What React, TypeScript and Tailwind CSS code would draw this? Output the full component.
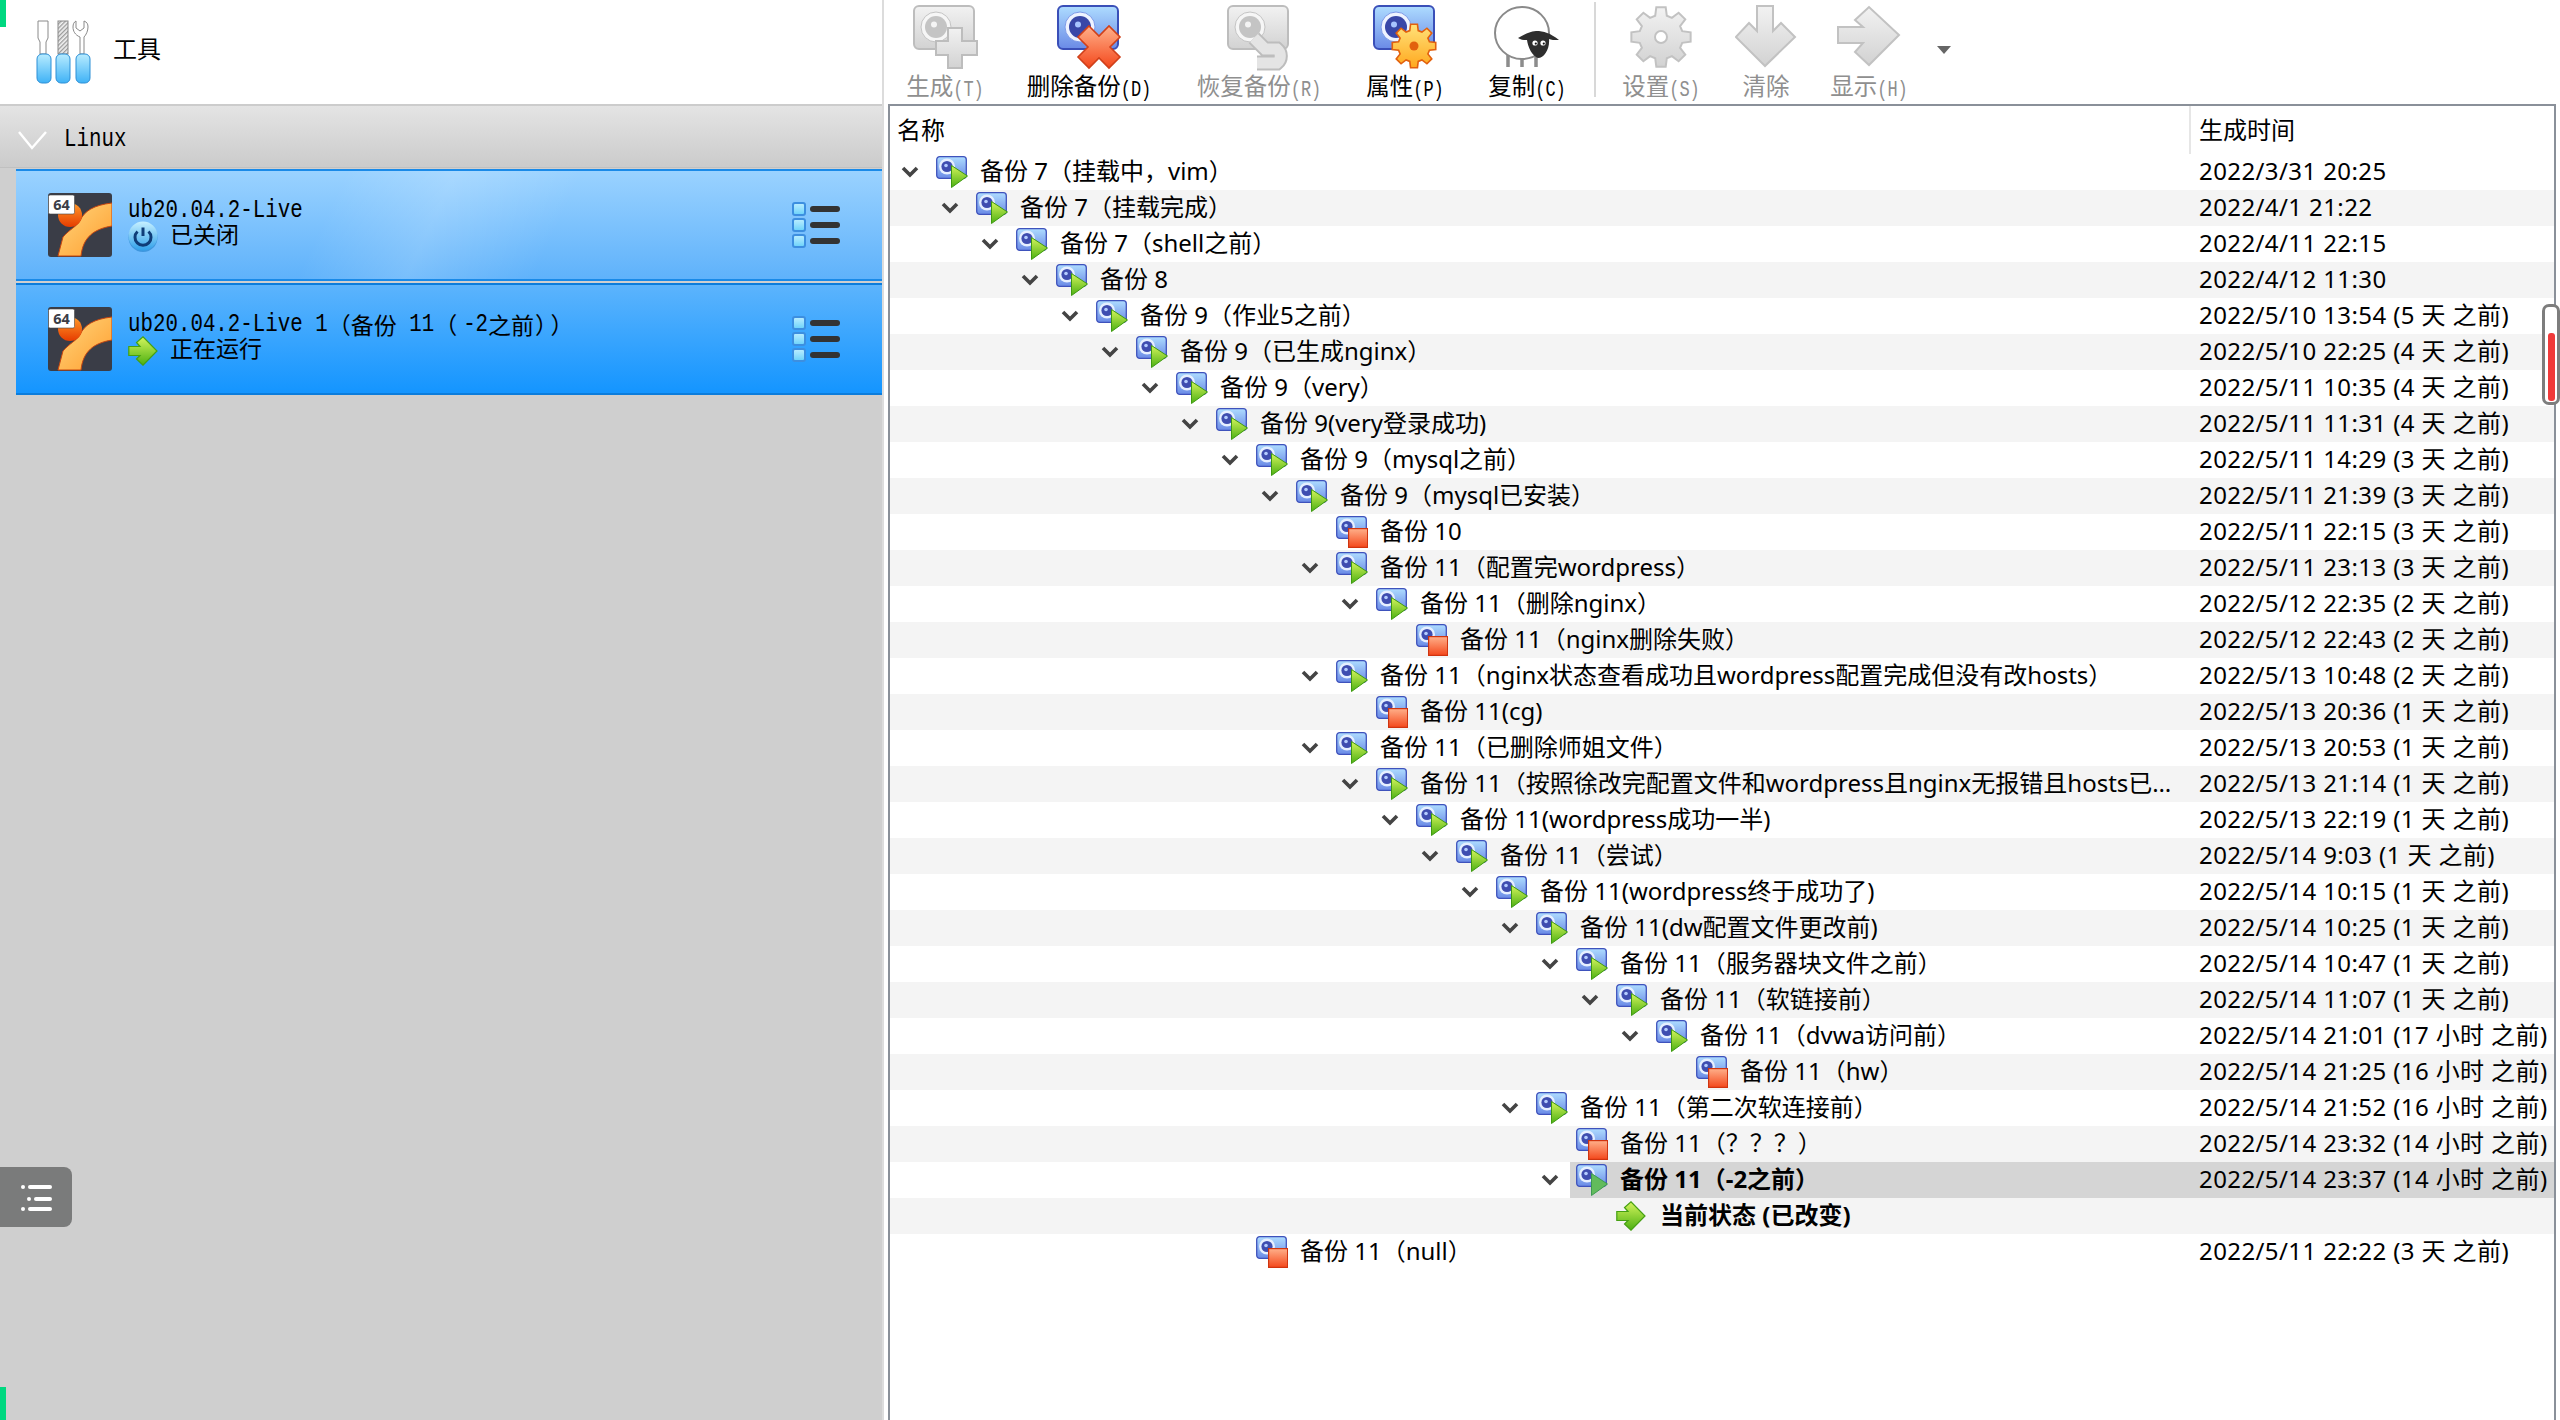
import React from "react";

type Snap = { name: string; level: number; time: string; leaf?: boolean; open?: boolean };

const rows: Snap[] = [
  { name: "备份 7（挂载中，vim）", level: 0, time: "2022/3/31 20:25" },
  { name: "备份 7（挂载完成）", level: 1, time: "2022/4/1 21:22" },
  { name: "备份 7（shell之前）", level: 2, time: "2022/4/11 22:15" },
  { name: "备份 8", level: 3, time: "2022/4/12 11:30" },
  { name: "备份 9（作业5之前）", level: 4, time: "2022/5/10 13:54 (5 天 之前)" },
  { name: "备份 9（已生成nginx）", level: 5, time: "2022/5/10 22:25 (4 天 之前)" },
  { name: "备份 9（very）", level: 6, time: "2022/5/11 10:35 (4 天 之前)" },
  { name: "备份 9(very登录成功)", level: 7, time: "2022/5/11 11:31 (4 天 之前)" },
  { name: "备份 9（mysql之前）", level: 8, time: "2022/5/11 14:29 (3 天 之前)" },
  { name: "备份 9（mysql已安装）", level: 9, time: "2022/5/11 21:39 (3 天 之前)" },
  { name: "备份 10", level: 10, time: "2022/5/11 22:15 (3 天 之前)", leaf: true },
  { name: "备份 11（配置完wordpress）", level: 10, time: "2022/5/11 23:13 (3 天 之前)" },
  { name: "备份 11（删除nginx）", level: 11, time: "2022/5/12 22:35 (2 天 之前)" },
  { name: "备份 11（nginx删除失败）", level: 12, time: "2022/5/12 22:43 (2 天 之前)", leaf: true },
  { name: "备份 11（nginx状态查看成功且wordpress配置完成但没有改hosts）", level: 10, time: "2022/5/13 10:48 (2 天 之前)" },
  { name: "备份 11(cg)", level: 11, time: "2022/5/13 20:36 (1 天 之前)", leaf: true },
  { name: "备份 11（已删除师姐文件）", level: 10, time: "2022/5/13 20:53 (1 天 之前)" },
  { name: "备份 11（按照徐改完配置文件和wordpress且nginx无报错且hosts已…", level: 11, time: "2022/5/13 21:14 (1 天 之前)" },
  { name: "备份 11(wordpress成功一半)", level: 12, time: "2022/5/13 22:19 (1 天 之前)" },
  { name: "备份 11（尝试）", level: 13, time: "2022/5/14 9:03 (1 天 之前)" },
  { name: "备份 11(wordpress终于成功了)", level: 14, time: "2022/5/14 10:15 (1 天 之前)" },
  { name: "备份 11(dw配置文件更改前)", level: 15, time: "2022/5/14 10:25 (1 天 之前)" },
  { name: "备份 11（服务器块文件之前）", level: 16, time: "2022/5/14 10:47 (1 天 之前)" },
  { name: "备份 11（软链接前）", level: 17, time: "2022/5/14 11:07 (1 天 之前)" },
  { name: "备份 11（dvwa访问前）", level: 18, time: "2022/5/14 21:01 (17 小时 之前)" },
  { name: "备份 11（hw）", level: 19, time: "2022/5/14 21:25 (16 小时 之前)", leaf: true },
  { name: "备份 11（第二次软连接前）", level: 15, time: "2022/5/14 21:52 (16 小时 之前)" },
  { name: "备份 11（？？？）", level: 16, time: "2022/5/14 23:32 (14 小时 之前)", leaf: true },
  { name: "备份 11（-2之前）", level: 16, time: "2022/5/14 23:37 (14 小时 之前)" },
  { name: "当前状态 (已改变)", level: 17, time: "" },
  { name: "备份 11（null）", level: 8, time: "2022/5/11 22:22 (3 天 之前)", leaf: true },
];

// the latin part of the old bitmap font is tall and narrow, stretch the mono font to get there
const mono = "inline-block font-['Liberation_Mono',monospace] text-[20.8px] leading-[20px] scale-y-[1.25] whitespace-pre";

// gear outline, teeth are little trapezoids round the rim
const gearPoints = (cx: number, cy: number, outer: number, inner: number, teeth: number) => {
  const pts: string[] = [];
  const step = (Math.PI * 2) / teeth;
  for (let i = 0; i < teeth; i++) {
    const a = i * step;
    const at = (r: number, t: number) =>
      `${(cx + r * Math.sin(a + t)).toFixed(2)},${(cy - r * Math.cos(a + t)).toFixed(2)}`;
    pts.push(at(inner, -step * 0.34), at(outer, -step * 0.2), at(outer, step * 0.2), at(inner, step * 0.34));
  }
  return pts.join(" ");
};

const Defs = () => (
  <svg className="absolute size-0">
    <defs>
      <linearGradient id="blue" x1="0" y1="0" x2="0" y2="1">
        <stop offset="0" stopColor="#aedcff" />
        <stop offset="1" stopColor="#6a8ae6" />
      </linearGradient>
      <linearGradient id="grey" x1="0" y1="0" x2="0" y2="1">
        <stop offset="0" stopColor="#f2f2f2" />
        <stop offset="1" stopColor="#d2d2d2" />
      </linearGradient>
      <linearGradient id="green" x1="0" y1="0" x2="0" y2="1">
        <stop offset="0" stopColor="#d4f45c" />
        <stop offset="1" stopColor="#4cb012" />
      </linearGradient>
      <linearGradient id="red" x1="0" y1="0" x2="0" y2="1">
        <stop offset="0" stopColor="#ffb08a" />
        <stop offset="1" stopColor="#f4481c" />
      </linearGradient>
      <linearGradient id="yellow" x1="0" y1="0" x2="0" y2="1">
        <stop offset="0" stopColor="#ffe27a" />
        <stop offset="1" stopColor="#ffa81e" />
      </linearGradient>
      <linearGradient id="orange" x1="0" y1="0" x2="1" y2="1">
        <stop offset="0" stopColor="#ffd67e" />
        <stop offset="1" stopColor="#ff9e2e" />
      </linearGradient>
      <linearGradient id="ball" x1="0" y1="0" x2="0" y2="1">
        <stop offset="0" stopColor="#ff9a2a" />
        <stop offset="1" stopColor="#e63c00" />
      </linearGradient>
      <linearGradient id="handle" x1="0" y1="0" x2="0" y2="1">
        <stop offset="0" stopColor="#b8ecff" />
        <stop offset="1" stopColor="#3fb2f6" />
      </linearGradient>
      <linearGradient id="power" x1="0" y1="0" x2="0" y2="1">
        <stop offset="0" stopColor="#c6f0ff" />
        <stop offset="1" stopColor="#2fa0ea" />
      </linearGradient>
      <pattern id="hatch" width="3" height="3" patternUnits="userSpaceOnUse" patternTransform="rotate(45)">
        <rect width="3" height="3" fill="#f2f2f2" />
        <rect width="1.3" height="3" fill="#9a9a9a" />
      </pattern>
    </defs>
  </svg>
);

const SnapIcon = ({ leaf, dim }: { leaf?: boolean; dim?: boolean }) => (
  <svg width="32" height="32" viewBox="0 0 32 32" className="shrink-0">
    <rect x="0.7" y="0.7" width="29.6" height="21.6" rx="3" fill="url(#blue)" stroke="#3e52bc" strokeWidth="1.3" />
    <circle cx="11" cy="10.5" r="8" fill="#e6efff" />
    <circle cx="11" cy="10.5" r="5.6" fill="#3f4db0" />
    <circle cx="10" cy="9.5" r="1.8" fill="#b4ccff" />
    {leaf ? (
      <rect x="12.6" y="12.6" width="19" height="18.8" fill="url(#red)" stroke="#d0340f" strokeWidth="1.2" />
    ) : (
      <polygon
        points="15.5,9.5 31.5,20 15.5,31.5"
        fill={dim ? "#62bb5c" : "url(#green)"}
        stroke={dim ? "#3c9a50" : "#3e9a10"}
        strokeWidth="1"
      />
    )}
  </svg>
);

const GreenArrow = () => (
  <svg width="30" height="30" viewBox="0 0 30 30" className="shrink-0">
    <polygon
      points="0.8,10.5 12,10.5 8.5,6.5 15,0.8 29,15 15,29.2 8.5,23 12,19.5 0.8,19.5"
      fill="url(#green)"
      stroke="#45a012"
      strokeWidth="1.2"
    />
  </svg>
);

const BigSnap = ({ grey, children }: { grey?: boolean; children?: React.ReactNode }) => (
  <svg width="64" height="66" viewBox="0 0 64 66" className="shrink-0 overflow-visible">
    <rect
      x="1"
      y="1"
      width="60"
      height="43"
      rx="5"
      fill={grey ? "url(#grey)" : "url(#blue)"}
      stroke={grey ? "#bdbdbd" : "#3a4fb8"}
      strokeWidth="2"
    />
    <circle cx="23" cy="22" r="15" fill={grey ? "#f6f6f6" : "#eef3ff"} stroke={grey ? "#c4c4c4" : "#7d9ae8"} />
    <circle cx="23" cy="22" r="11" fill={grey ? "#c4c4c4" : "#3947a8"} />
    <circle cx="21" cy="19.5" r="3" fill={grey ? "#f4f4f4" : "#a8c4ff"} />
    {children}
  </svg>
);

const PlusIcon = () => (
  <BigSnap grey>
    <polygon
      points="35,23 49,23 49,36 64,36 64,50 49,50 49,63 35,63 35,50 23,50 23,36 35,36"
      fill="url(#grey)"
      stroke="#bdbdbd"
      strokeWidth="2"
    />
  </BigSnap>
);

const DeleteIcon = () => (
  <BigSnap>
    <polygon
      points="32,21 42,31 52,21 63,32 53,42 63,52 52,63 42,53 32,63 21,52 31,42 21,32"
      fill="url(#red)"
      stroke="#d0401a"
      strokeWidth="1.6"
    />
  </BigSnap>
);

const RestoreIcon = () => (
  <BigSnap grey>
    <path d="M27 33 L38 44 H50 A9 9 0 0 1 50 58 H30" fill="none" stroke="#bdbdbd" strokeWidth="15" />
    <path d="M27 33 L38 44 H50 A9 9 0 0 1 50 58 H30" fill="none" stroke="#e4e4e4" strokeWidth="11" />
  </BigSnap>
);

const PropIcon = () => (
  <BigSnap>
    <polygon points={gearPoints(41, 41, 22, 16, 8)} fill="url(#yellow)" stroke="#e2600e" strokeWidth="1.6" />
    <circle cx="41" cy="41" r="4.5" fill="#e2600e" />
  </BigSnap>
);

const SheepIcon = () => (
  <svg width="66" height="66" viewBox="0 0 66 66" className="shrink-0">
    <path d="M14 50 V62 M28 52 V62 M42 52 V62" stroke="#8c8c8c" strokeWidth="3.5" />
    <ellipse cx="28" cy="28" rx="27" ry="26" fill="#fff" stroke="#8a8a8a" strokeWidth="2" />
    <path d="M24 33 C30 30 34 27 42 26 C50 26 56 28 65 35 C60 35 57 35 55 34 C56 44 50 53 44 53 C38 51 34 42 33 35 C30 35 27 35 24 33 Z" fill="#2e2e2e" />
    <circle cx="41" cy="38" r="2.6" fill="#fff" />
    <circle cx="49" cy="38" r="2.6" fill="#fff" />
    <circle cx="41.8" cy="38.6" r="1.1" fill="#111" />
    <circle cx="49.8" cy="38.6" r="1.1" fill="#111" />
  </svg>
);

const GearIcon = () => (
  <svg width="66" height="66" viewBox="0 0 66 66" className="shrink-0">
    <polygon points={gearPoints(33, 32, 30, 22, 8)} fill="url(#grey)" stroke="#c2c2c2" strokeWidth="2" />
    <circle cx="33" cy="32" r="6" fill="#fff" stroke="#c2c2c2" strokeWidth="2" />
  </svg>
);

const DownIcon = () => (
  <svg width="62" height="66" viewBox="0 0 62 66" className="shrink-0">
    <polygon
      points="22,1 38,1 38,26 46,18 60,32 30,61 0.8,32 14,18 22,26"
      fill="url(#grey)"
      stroke="#c2c2c2"
      strokeWidth="2"
    />
  </svg>
);

const RightIcon = () => (
  <svg width="64" height="66" viewBox="0 0 64 66" className="shrink-0">
    <polygon
      points="1,22 26,22 18,15 32,2 62,30 32,60 18,47 26,38 1,38"
      fill="url(#grey)"
      stroke="#c2c2c2"
      strokeWidth="2"
    />
  </svg>
);

const ToolsIcon = () => (
  <svg width="58" height="64" viewBox="0 0 58 64" className="shrink-0">
    <path d="M2 1 H12 V18 L10 22 V34 H4 V22 L2 18 Z" fill="#fff" stroke="#8a8a8a" />
    <rect x="22" y="1" width="10" height="33" fill="url(#hatch)" stroke="#8a8a8a" />
    <path d="M44 34 V17 C39 15 37 11 37 7 C37 4 38 2 40 1 V8 L44 11 L48 8 V1 C51 2 52 4 52 7 C52 11 50 15 48 17 V34 Z" fill="#fff" stroke="#8a8a8a" />
    <rect x="1" y="34" width="14" height="29" rx="5" fill="url(#handle)" stroke="#2d8fd6" />
    <rect x="20" y="34" width="14" height="29" rx="5" fill="url(#handle)" stroke="#2d8fd6" />
    <rect x="40" y="34" width="14" height="29" rx="5" fill="url(#handle)" stroke="#2d8fd6" />
  </svg>
);

const VmIcon = () => (
  <svg width="64" height="64" viewBox="0 0 64 64" className="shrink-0">
    <rect width="64" height="64" rx="3" fill="#3a3d47" />
    <path d="M10 63 L15 44 C22 36 28 34 32 28 C36 18 46 12 64 10 V33 C46 36 35 44 33 63 Z" fill="url(#orange)" stroke="#c9470f" strokeWidth="1" />
    <circle cx="22" cy="22" r="12" fill="url(#ball)" />
    <rect x="0.5" y="2" width="26" height="19" rx="1.5" fill="#fff" stroke="#444" strokeWidth="0.6" />
    <text x="13.5" y="16.5" textAnchor="middle" fontSize="14.5" fontWeight="700" fill="#3a3d47" fontFamily="Noto Sans, sans-serif">
      64
    </text>
  </svg>
);

const PowerIcon = () => (
  <svg width="30" height="32" viewBox="0 0 30 32" className="shrink-0">
    <circle cx="15" cy="16.5" r="14.5" fill="#1f7fca" opacity="0.6" />
    <circle cx="15" cy="15" r="14.5" fill="url(#power)" />
    <path d="M9.5 10.5 A8 8 0 1 0 20.5 10.5" fill="none" stroke="#0f3d78" strokeWidth="3" />
    <path d="M15 6.5 V15" stroke="#0f3d78" strokeWidth="3" />
  </svg>
);

const MenuIcon = () => (
  <div className="flex flex-col gap-[2px]">
    {[0, 1, 2].map((i) => (
      <div key={i} className="flex items-center gap-[4px]">
        <div className="size-[14px] rounded-[3px] border-2 border-[#3d8fe0] bg-gradient-to-b from-[#b6ecff] to-[#6fd4fb]" />
        <div className="w-[30px] h-[6px] rounded-[3px] bg-[#333]" />
      </div>
    ))}
  </div>
);

const Tool = ({ w, label, hint, off, children }: { w: string; label: string; hint?: string; off?: boolean; children: React.ReactNode }) => (
  <div className={`${w} h-full shrink-0 flex flex-col items-center pt-[5px]`}>
    <div className="h-[66px] flex items-center justify-center">{children}</div>
    <div className={`mt-[1px] leading-[28px] text-[23.5px] whitespace-nowrap ${off ? "text-[#8f8f8f]" : "text-black"}`}>
      {label}
      {hint && <span className="inline-block font-['Liberation_Mono',monospace] text-[17px] scale-y-[1.35]">{hint}</span>}
    </div>
  </div>
);

const VmRow = ({ second, title, status, icon }: { second?: boolean; title: React.ReactNode; status: string; icon: React.ReactNode }) => (
  <div
    className={`ml-[16px] h-[112px] flex items-center border-y-2 ${
      second
        ? "mt-[2px] border-[#0c7ddc] bg-[linear-gradient(#5cb4fd,#1495ff)]"
        : "border-[#1a8ae8] bg-[linear-gradient(115deg,transparent_36%,rgba(255,255,255,0.16)_48%,transparent_62%),linear-gradient(#9ad2ff,#5fb2fb)]"
    }`}
  >
    <div className="ml-[32px]">
      <VmIcon />
    </div>
    <div className="ml-[16px] flex-1 flex flex-col pb-[8px]">
      <div className="h-[26px] pt-[6px] flex items-center whitespace-nowrap text-[23px] leading-[20px]">{title}</div>
      <div className="h-[26px] flex items-center text-[23px] leading-[22px]">
        <div className="mt-[5px]">{icon}</div>
        <span className="ml-[12px]">{status}</span>
      </div>
    </div>
    <div className="mr-[42px]">
      <MenuIcon />
    </div>
  </div>
);

const Row = ({ row, index }: { row: Snap; index: number }) => {
  const selected = index === 28;
  const current = index === 29;
  return (
    <div className={`h-[36px] flex items-center text-[24px] text-black ${index % 2 === 1 ? "bg-[#f4f4f4]" : "bg-white"}`}>
      <div className="w-[1301px] h-full shrink-0 flex items-center overflow-hidden">
        <div className="shrink-0" style={{ width: 9 + row.level * 40 }} />
        <div className="w-[22px] shrink-0 flex justify-center">
          {!row.leaf && !current && (
            <svg width="18" height="12" viewBox="0 0 18 12">
              <path d="M2 2 L9 9 L16 2" fill="none" stroke="#444" strokeWidth="3.6" />
            </svg>
          )}
        </div>
        <div className={`ml-[9px] flex-1 h-full flex items-center pl-[6px] min-w-0 ${selected ? "bg-[#d5d5d5] font-bold" : ""} ${current ? "font-bold" : ""}`}>
          {current ? <GreenArrow /> : <SnapIcon leaf={row.leaf} dim={selected} />}
          <span className={`${current ? "ml-[14px]" : "ml-[12px]"} pb-[2px] whitespace-nowrap`}>{row.name}</span>
        </div>
      </div>
      <div className={`flex-1 h-full flex items-center pl-[8px] pb-[2px] whitespace-nowrap tracking-[0.4px] ${selected ? "bg-[#d5d5d5]" : ""}`}>{row.time}</div>
    </div>
  );
};

export default function App() {
  return (
    <div className="relative h-screen w-full overflow-hidden flex bg-white text-black font-['Noto_Sans','Noto_Sans_CJK_SC',sans-serif]">
      <Defs />
      {/* left: tools + machine list */}
      <div className="w-[882px] h-full shrink-0 flex flex-col">
        <div className="h-[104px] shrink-0 flex items-center pl-[36px] bg-white">
          <ToolsIcon />
          <span className="ml-[19px] pb-[6px] text-[24px]">工具</span>
        </div>
        <div className="flex-1 bg-[#cfcfcf] border-t-2 border-[#cccccc]">
          <div className="h-[62px] flex items-center pl-[18px] pt-[7px] bg-gradient-to-b from-[#e4e4e4] to-[#cbcbcb] border-b border-[#c0c0c0]">
            <svg width="30" height="20" viewBox="0 0 30 20">
              <path d="M1 2 L14 18 L28 2" fill="none" stroke="#fff" strokeWidth="2.4" />
            </svg>
            <span className={`ml-[16px] ${mono}`}>Linux</span>
          </div>
          <div className="mt-[1px]">
            <VmRow
              title={<span className={mono}>ub20.04.2-Live</span>}
              status="已关闭"
              icon={<PowerIcon />}
            />
            <VmRow
              second
              title={
                <>
                  <span className={mono}>ub20.04.2-Live 1</span>
                  <span>（备份</span>
                  <span className={mono}> 11</span>
                  <span>（</span>
                  <span className={`ml-[6px] ${mono}`}>-2</span>
                  <span>之前</span>
                  <span className="ml-[1px] tracking-[4px]">））</span>
                </>
              }
              status="正在运行"
              icon={<GreenArrow />}
            />
          </div>
        </div>
      </div>
      <div className="w-[2px] h-full shrink-0 bg-[#dcdcdc]" />

      {/* right: snapshot toolbar + tree */}
      <div className="flex-1 min-w-0 h-full flex flex-col pl-[2px]">
        <div className="h-[104px] shrink-0 flex items-start">
          <Tool w="w-[118px]" label="生成" hint="(T)" off>
            <PlusIcon />
          </Tool>
          <Tool w="w-[170px]" label="删除备份" hint="(D)">
            <DeleteIcon />
          </Tool>
          <Tool w="w-[170px]" label="恢复备份" hint="(R)" off>
            <RestoreIcon />
          </Tool>
          <Tool w="w-[122px]" label="属性" hint="(P)">
            <PropIcon />
          </Tool>
          <Tool w="w-[122px]" label="复制" hint="(C)">
            <SheepIcon />
          </Tool>
          <div className="ml-[6px] mt-[2px] w-[2px] h-[95px] bg-[#d8d8d8]" />
          <Tool w="w-[130px]" label="设置" hint="(S)" off>
            <GearIcon />
          </Tool>
          <Tool w="w-[80px]" label="清除" off>
            <DownIcon />
          </Tool>
          <Tool w="w-[126px]" label="显示" hint="(H)" off>
            <RightIcon />
          </Tool>
          <svg width="14" height="8" viewBox="0 0 14 8" className="ml-[5px] mt-[46px]">
            <polygon points="0,0 14,0 7,8" fill="#666" />
          </svg>
        </div>
        <div className="flex-1 min-h-0 ml-[2px] mr-[4px] border-2 border-b-0 border-[#8a9099] overflow-hidden">
          <div className="h-[48px] flex items-center text-[24px]">
            <div className="w-[1301px] h-full shrink-0 flex items-center pl-[7px] border-r-2 border-[#e6e6e6]">名称</div>
            <div className="pl-[8px]">生成时间</div>
          </div>
          {rows.map((row, i) => (
            <Row key={i} row={row} index={i} />
          ))}
        </div>
      </div>

      {/* overlays from the recording app */}
      <div className="absolute left-0 top-0 w-[6px] h-[27px] bg-[#00d880]" />
      <div className="absolute left-0 bottom-0 w-[6px] h-[33px] bg-[#00d880]" />
      <div className="absolute left-0 top-[1167px] w-[72px] h-[60px] rounded-r-[8px] bg-[#7a7b7b] flex items-center justify-center">
        <svg width="34" height="28" viewBox="0 0 34 28">
          <g fill="#fff">
            <circle cx="4" cy="4" r="2" />
            <rect x="9" y="2" width="24" height="4" rx="2" />
            <circle cx="10" cy="16" r="2" />
            <rect x="15" y="14" width="18" height="4" rx="2" />
            <circle cx="4" cy="26" r="2" />
            <rect x="9" y="24" width="24" height="4" rx="2" />
          </g>
        </svg>
      </div>
      <div className="absolute right-0 top-[304px] w-[18px] h-[101px] rounded-[7px] border-[3px] border-[#7d7d7d] bg-white pt-[26px] pl-[3px]">
        <div className="w-[7px] h-[68px] rounded-[3px] bg-[#f03a3a]" />
      </div>
    </div>
  );
}
